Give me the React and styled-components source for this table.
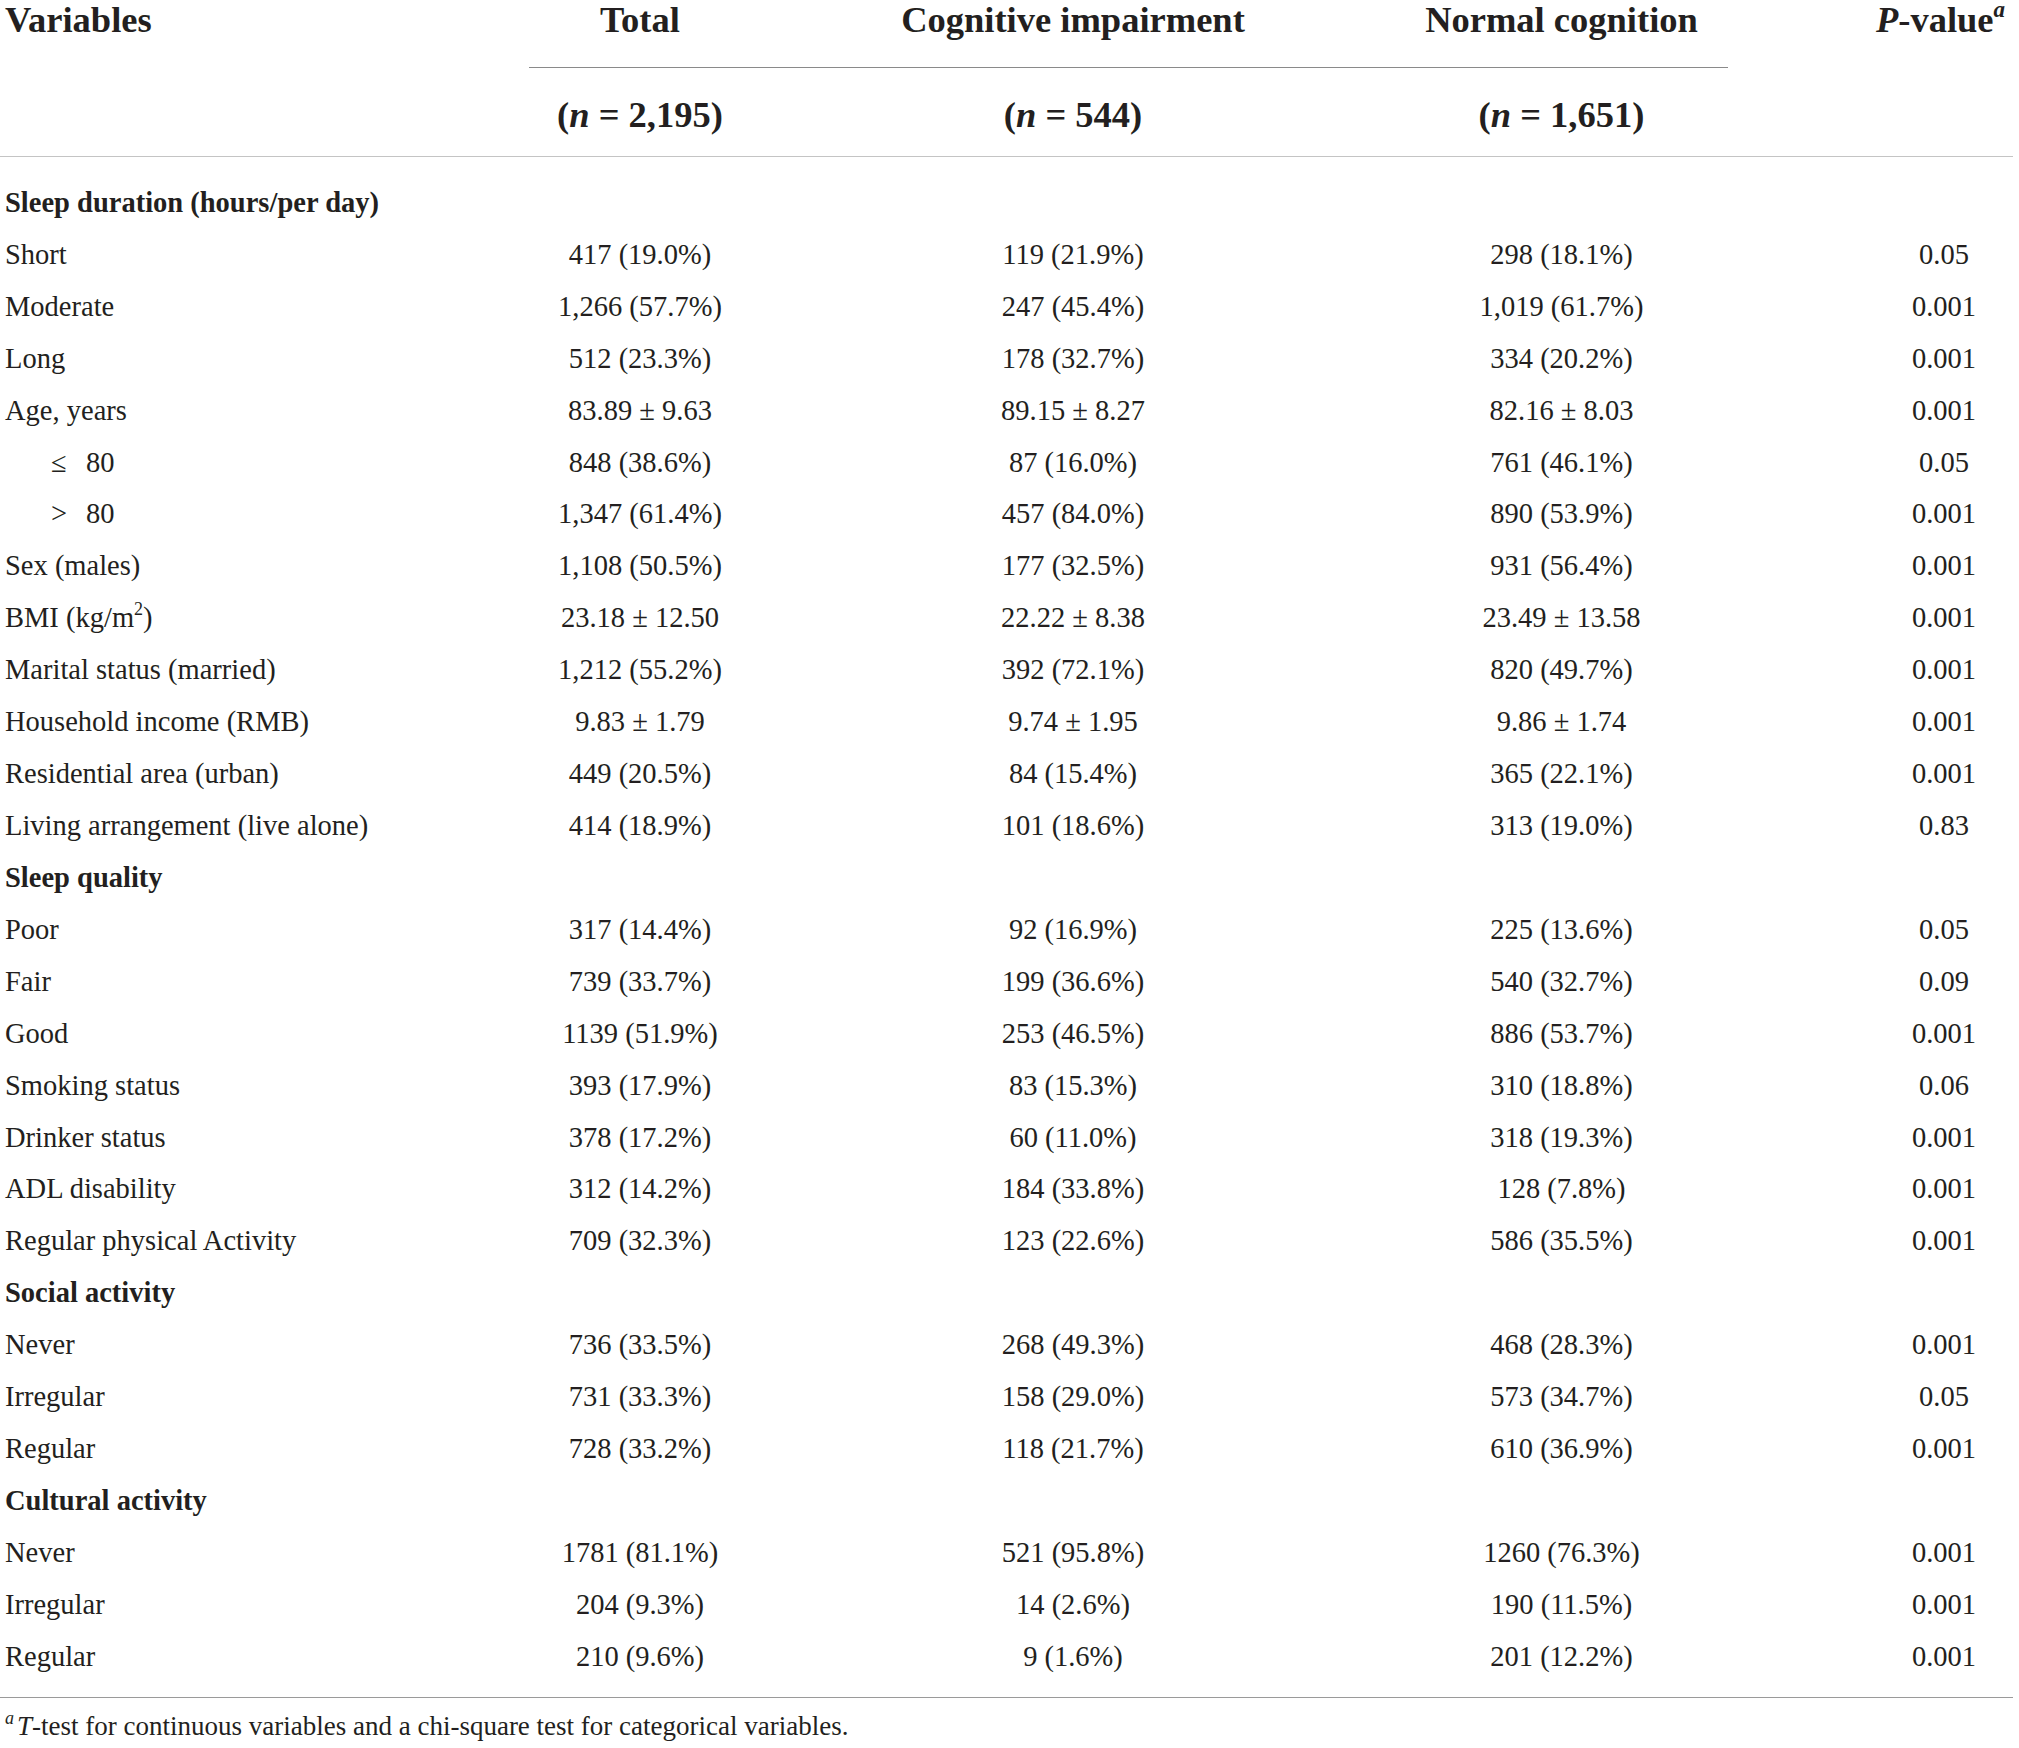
import styled, { createGlobalStyle } from 'styled-components'

const GlobalStyle = createGlobalStyle`
	html, body {
		margin: 0;
		padding: 0;
		background: #ffffff;
	}
	body {
		font-family: 'Liberation Serif', 'DejaVu Serif', serif;
		color: #231f20;
	}
`

const COLUMNS = '529px 222px 644px 333px 1fr'

const rows = [
	{ section: 'Sleep duration (hours/per day)' },
	{ label: 'Short', values: ['417 (19.0%)', '119 (21.9%)', '298 (18.1%)', '0.05'] },
	{ label: 'Moderate', values: ['1,266 (57.7%)', '247 (45.4%)', '1,019 (61.7%)', '0.001'] },
	{ label: 'Long', values: ['512 (23.3%)', '178 (32.7%)', '334 (20.2%)', '0.001'] },
	{ label: 'Age, years', values: ['83.89 ± 9.63', '89.15 ± 8.27', '82.16 ± 8.03', '0.001'] },
	{ label: '80', sign: '≤', values: ['848 (38.6%)', '87 (16.0%)', '761 (46.1%)', '0.05'] },
	{ label: '80', sign: '>', values: ['1,347 (61.4%)', '457 (84.0%)', '890 (53.9%)', '0.001'] },
	{ label: 'Sex (males)', values: ['1,108 (50.5%)', '177 (32.5%)', '931 (56.4%)', '0.001'] },
	{ label: 'BMI', bmi: true, values: ['23.18 ± 12.50', '22.22 ± 8.38', '23.49 ± 13.58', '0.001'] },
	{ label: 'Marital status (married)', values: ['1,212 (55.2%)', '392 (72.1%)', '820 (49.7%)', '0.001'] },
	{ label: 'Household income (RMB)', values: ['9.83 ± 1.79', '9.74 ± 1.95', '9.86 ± 1.74', '0.001'] },
	{ label: 'Residential area (urban)', values: ['449 (20.5%)', '84 (15.4%)', '365 (22.1%)', '0.001'] },
	{ label: 'Living arrangement (live alone)', values: ['414 (18.9%)', '101 (18.6%)', '313 (19.0%)', '0.83'] },
	{ section: 'Sleep quality' },
	{ label: 'Poor', values: ['317 (14.4%)', '92 (16.9%)', '225 (13.6%)', '0.05'] },
	{ label: 'Fair', values: ['739 (33.7%)', '199 (36.6%)', '540 (32.7%)', '0.09'] },
	{ label: 'Good', values: ['1139 (51.9%)', '253 (46.5%)', '886 (53.7%)', '0.001'] },
	{ label: 'Smoking status', values: ['393 (17.9%)', '83 (15.3%)', '310 (18.8%)', '0.06'] },
	{ label: 'Drinker status', values: ['378 (17.2%)', '60 (11.0%)', '318 (19.3%)', '0.001'] },
	{ label: 'ADL disability', values: ['312 (14.2%)', '184 (33.8%)', '128 (7.8%)', '0.001'] },
	{ label: 'Regular physical Activity', values: ['709 (32.3%)', '123 (22.6%)', '586 (35.5%)', '0.001'] },
	{ section: 'Social activity' },
	{ label: 'Never', values: ['736 (33.5%)', '268 (49.3%)', '468 (28.3%)', '0.001'] },
	{ label: 'Irregular', values: ['731 (33.3%)', '158 (29.0%)', '573 (34.7%)', '0.05'] },
	{ label: 'Regular', values: ['728 (33.2%)', '118 (21.7%)', '610 (36.9%)', '0.001'] },
	{ section: 'Cultural activity' },
	{ label: 'Never', values: ['1781 (81.1%)', '521 (95.8%)', '1260 (76.3%)', '0.001'] },
	{ label: 'Irregular', values: ['204 (9.3%)', '14 (2.6%)', '190 (11.5%)', '0.001'] },
	{ label: 'Regular', values: ['210 (9.6%)', '9 (1.6%)', '201 (12.2%)', '0.001'] },
]

const Table = styled.div`
	width: 2013px;
	display: flex;
	flex-direction: column;
`

const HeadRow = styled.div`
	display: grid;
	grid-template-columns: ${COLUMNS};
	height: ${(p) => p.$height}px;
	border-bottom: ${(p) => (p.$ruled ? '1px solid #c4c4c4' : 'none')};
	box-sizing: border-box;
`

const HeadCell = styled.div`
	font-size: 36.5px;
	font-weight: 700;
	line-height: 40px;
	text-align: ${(p) => (p.$left ? 'left' : 'center')};
	padding-left: ${(p) => (p.$left ? '5px' : p.$pcol ? '140px' : '0')};
	padding-top: ${(p) => p.$top || 0}px;
	border-bottom: ${(p) => (p.$underline ? '1px solid #8a8a8a' : 'none')};
	white-space: nowrap;

	& i {
		font-style: italic;
	}

	& sup {
		font-size: 23px;
		font-style: italic;
		line-height: 0;
		vertical-align: 15px;
	}
`

const Body = styled.div`
	padding: 20px 0 14px;
	border-bottom: 1px solid #9a9a9a;
`

const Row = styled.div`
	display: grid;
	grid-template-columns: ${COLUMNS};
	height: 51.93px;
	align-items: center;
	font-size: 28.5px;
	line-height: 34px;
	white-space: nowrap;
`

const Label = styled.div`
	padding-left: ${(p) => (p.$indent ? '51px' : '5px')};
	font-weight: ${(p) => (p.$bold ? 700 : 400)};

	& sup {
		font-size: 18px;
		line-height: 0;
		vertical-align: 12px;
	}
`

const Sign = styled.span`
	display: inline-block;
	width: 35px;
`

const Value = styled.div`
	text-align: center;
	padding-left: ${(p) => (p.$pcol ? '147px' : '0')};
`

const Footnote = styled.div`
	padding: 12px 0 0 5px;
	font-size: 27px;
	line-height: 32px;

	& sup {
		font-style: italic;
		font-size: 18px;
		line-height: 0;
		vertical-align: 11px;
		margin-right: 3px;
	}
`

export default function App() {
	return (
		<>
			<GlobalStyle />
			<Table>
				<HeadRow $height={68}>
					<HeadCell $left>Variables</HeadCell>
					<HeadCell $underline>Total</HeadCell>
					<HeadCell $underline>Cognitive impairment</HeadCell>
					<HeadCell $underline>Normal cognition</HeadCell>
					<HeadCell $pcol>
						<i>P</i>-value<sup>a</sup>
					</HeadCell>
				</HeadRow>
				<HeadRow $height={89} $ruled>
					<HeadCell $left />
					<HeadCell $top={27}>
						(<i>n</i> = 2,195)
					</HeadCell>
					<HeadCell $top={27}>
						(<i>n</i> = 544)
					</HeadCell>
					<HeadCell $top={27}>
						(<i>n</i> = 1,651)
					</HeadCell>
					<HeadCell />
				</HeadRow>
				<Body>
					{rows.map((row, i) =>
						row.section ? (
							<Row key={i}>
								<Label $bold>{row.section}</Label>
							</Row>
						) : (
							<Row key={i}>
								<Label $indent={!!row.sign}>
									{row.sign && <Sign>{row.sign}</Sign>}
									{row.bmi ? (
										<>
											BMI (kg/m<sup>2</sup>)
										</>
									) : (
										row.label
									)}
								</Label>
								{row.values.map((v, j) => (
									<Value key={j} $pcol={j === 3}>
										{v}
									</Value>
								))}
							</Row>
						),
					)}
				</Body>
				<Footnote>
					<sup>a</sup>
					<i>T</i>-test for continuous variables and a chi-square test for categorical
					variables.
				</Footnote>
			</Table>
		</>
	)
}
